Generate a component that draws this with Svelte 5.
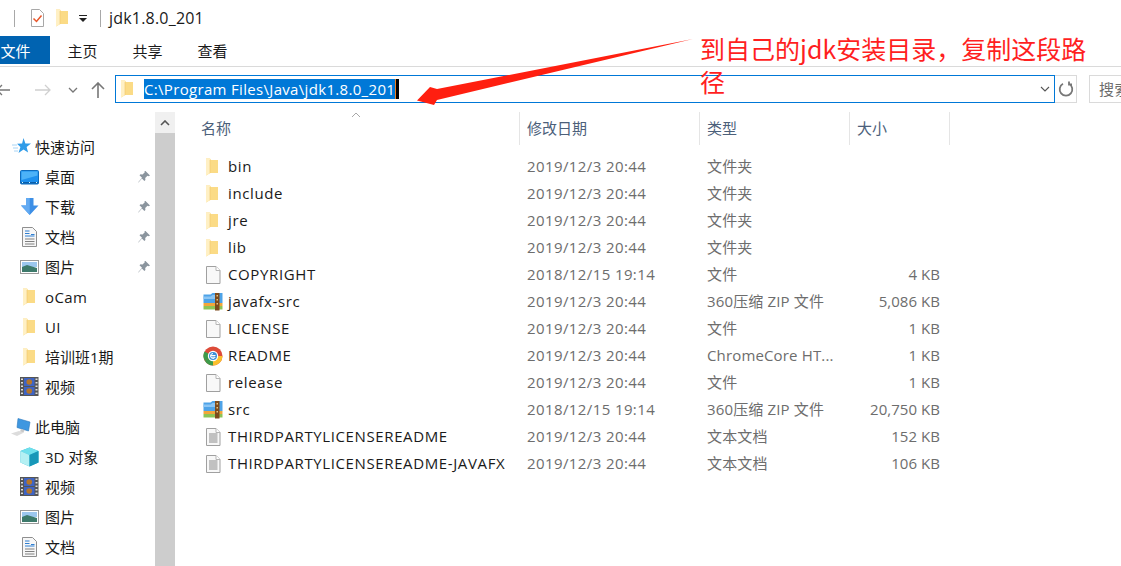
<script>
  const quick = [
    { icon: 'desktop', name: '桌面', pin: true, cjk: true },
    { icon: 'download', name: '下载', pin: true, cjk: true },
    { icon: 'doc', name: '文档', pin: true, cjk: true },
    { icon: 'pics', name: '图片', pin: true, cjk: true },
    { icon: 'folder', name: 'oCam' },
    { icon: 'folder', name: 'UI' },
    { icon: 'folder', name: '培训班1期', cjk: true },
    { icon: 'film', name: '视频', cjk: true }
  ];
  const computer = [
    { icon: 'cube', name: '3D 对象', cjk: true },
    { icon: 'film', name: '视频', cjk: true },
    { icon: 'pics', name: '图片', cjk: true },
    { icon: 'doc', name: '文档', cjk: true }
  ];
  const files = [
    { icon: 'folder', name: 'bin', date: '2019/12/3 20:44', type: '文件夹', size: '' },
    { icon: 'folder', name: 'include', date: '2019/12/3 20:44', type: '文件夹', size: '' },
    { icon: 'folder', name: 'jre', date: '2019/12/3 20:44', type: '文件夹', size: '' },
    { icon: 'folder', name: 'lib', date: '2019/12/3 20:44', type: '文件夹', size: '' },
    { icon: 'blank', name: 'COPYRIGHT', date: '2018/12/15 19:14', type: '文件', size: '4 KB' },
    { icon: 'zip', name: 'javafx-src', date: '2019/12/3 20:44', type: '360压缩 ZIP 文件', size: '5,086 KB' },
    { icon: 'blank', name: 'LICENSE', date: '2019/12/3 20:44', type: '文件', size: '1 KB' },
    { icon: 'chrome', name: 'README', date: '2019/12/3 20:44', type: 'ChromeCore HT...', size: '1 KB' },
    { icon: 'blank', name: 'release', date: '2019/12/3 20:44', type: '文件', size: '1 KB' },
    { icon: 'zip', name: 'src', date: '2018/12/15 19:14', type: '360压缩 ZIP 文件', size: '20,750 KB' },
    { icon: 'text', name: 'THIRDPARTYLICENSEREADME', date: '2019/12/3 20:44', type: '文本文档', size: '152 KB' },
    { icon: 'text', name: 'THIRDPARTYLICENSEREADME-JAVAFX', date: '2019/12/3 20:44', type: '文本文档', size: '106 KB' }
  ];
</script>

{#snippet ico(kind)}
  <svg class="ico" viewBox="0 0 20 20" width="20" height="20">
    {#if kind === 'folder'}
      <path d="M3 1.500h4l1 1.500h7v13H7.500L3 18.500z" fill="#fbdb86" />
      <path d="M3 1.500h4v14.500l-4 2.500z" fill="#fff0c4" />
      <path d="M7 3v13" stroke="#f0c668" stroke-width=".6" />
    {:else if kind === 'blank' || kind === 'text'}
      <path d="M3.500 1.500h9.500l4 4v13H3.500z" fill="#f8f8f8" stroke="#a0a0a0" />
      <path d="M13 1.500V5.500h4" fill="#fff" stroke="#b5b5b5" />
      {#if kind === 'text'}
        <path d="M6 7h8.500M6 9h8.500M6 11h8.500M6 13h8.500M6 15h8.500" stroke="#8a8a8a" />
      {/if}
    {:else if kind === 'zip'}
      <path d="M.5 2.500h7l2-1.500h10v10H.500z" fill="#4ea3e8" />
      <path d="M.5 4.500h7l2-1.500h3v4H.500z" fill="#8cc6f4" />
      <path d="M.5 11h19v3H.500z" fill="#f2a63a" />
      <path d="M.5 14h19v3.500H.500z" fill="#8dc456" />
      <path d="M12 1h4.500v17.500H12z" fill="#7d4a1c" />
      <path d="M13.500 3h1.500v1.500h-1.500zM13.500 7h1.500v1.500h-1.500zM13.500 11h1.500v1.500h-1.500z" fill="#e8c680" />
    {:else if kind === 'chrome'}
      <circle cx="10" cy="10" r="9.500" fill="#dd4b39" />
      <path d="M10 10L1.800 14.800A9.500 9.500 0 0 0 10 19.500z" fill="#3d9b4a" />
      <path d="M1.800 14.800A9.500 9.500 0 0 1 1.500 5.500L10 10z" fill="#3d9b4a" />
      <path d="M10 10h9.500A9.500 9.500 0 0 1 10 19.500z" fill="#fbc02d" />
      <circle cx="10" cy="10" r="5.200" fill="#fff" />
      <circle cx="10" cy="10" r="4" fill="#3b8fd9" />
      <path d="M7.500 9.500h5M8 11.200h4M10 7.500a2.500 2.500 0 1 0 2.300 3.500" fill="none" stroke="#fff" stroke-width="1" />
    {:else if kind === 'desktop'}
      <rect x=".5" y="3.500" width="18" height="13.500" rx="1" fill="#1e90ee" stroke="#0f6cbd" />
      <path d="M1 15h17v1.500H1z" fill="#0b5ea8" />
      <path d="M1.500 4.500h16v4L1.500 13z" fill="#4db2f7" />
      <path d="M2 15.500h1M9 15.500h1M16 15.500h1" stroke="#dff" />
    {:else if kind === 'download'}
      <path d="M6 1h7.500v7.500h5L9.750 18 1 8.500h5z" fill="#3d8fe6" />
      <path d="M6 1h3.700v17L1 8.500h5z" fill="#62aaf2" />
    {:else if kind === 'doc'}
      <path d="M2.500 .5h10l4 4v15h-14z" fill="#f7f7f7" stroke="#8f8f8f" />
      <path d="M5 4h4.500M5 6.500h4.500M11 7.500h3.500M5 9h9.500" stroke="#2f7fd1" />
      <path d="M5 12h9.500M5 14.500h9.500M5 17h9.500" stroke="#808080" />
    {:else if kind === 'pics'}
      <rect x=".5" y="3.500" width="18" height="13" fill="#fff" stroke="#9a9a9a" />
      <rect x="2" y="5" width="15" height="5" fill="#9cc7ee" />
      <path d="M2 10l5-2 10 3v4H2z" fill="#3d7a6b" />
    {:else if kind === 'film'}
      <rect x="0" y="0" width="18.500" height="19" fill="#555" />
      <rect x="4" y="1" width="10.500" height="8" fill="#3e64c4" />
      <rect x="4" y="10" width="10.500" height="8" fill="#3e64c4" />
      <circle cx="9.250" cy="5" r="2.800" fill="#b4762c" />
      <circle cx="9.250" cy="14" r="2.800" fill="#b4762c" />
      <path d="M1 1.500h2V3H1zM1 5h2v1.500H1zM1 8.500h2V10H1zM1 12h2v1.500H1zM1 15.500h2V17H1zM15.500 1.500h2V3h-2zM15.500 5h2v1.500h-2zM15.500 8.500h2V10h-2zM15.500 12h2v1.500h-2zM15.500 15.500h2V17h-2z" fill="#ddd" />
    {:else if kind === 'cube'}
      <path d="M9.500 .5l9 3.500v11.500l-9 4-9-4V4z" fill="#2db9d4" />
      <path d="M9.500 .5l9 3.500-9 4-9-4z" fill="#6fe0ec" />
      <path d="M.5 4l9 4v11.500l-9-4z" fill="#b4f0f3" />
      <path d="M9.500 8l9-4v11.500l-9 4z" fill="#1797b8" />
    {:else if kind === 'star'}
      <path d="M12.500 1l1.900 5.400 5.600.2-4.400 3.500 1.500 5.400-4.600-3.100-5 3.500 1.900-5.800-3.400-3.300 5.100-.3z" fill="#2f9be8" />
      <path d="M1 8h5M2 11h5M3 14h4" stroke="#a8d4f5" />
    {:else if kind === 'pc'}
      <path d="M7 1.500l12 3.500-1.500 9L6 10.500z" fill="#3f97e0" stroke="#2a78bd" stroke-width=".6" />
      <path d="M10 12l3.500 1-1 2.500-3.500-1z" fill="#c8c8c8" />
      <path d="M0 16.500l8-2.500 5 1.500-7 3.500z" fill="#dcdcdc" />
    {/if}
  </svg>
{/snippet}

{#snippet pin()}
  <svg class="pin" viewBox="0 0 14 14" width="14" height="14">
    <path d="M8.500 1l4.500 4.500-1.300.7-1.200-.4-2.300 2.300.2 2-1 1-2.500-2.500L1.500 12.500l-.3-.3 3.800-4.500L2.500 5.300l1-1 2 .2 2.300-2.300-.3-1.100z" fill="#8b959e" />
  </svg>
{/snippet}

{#snippet navrow(item)}
  <div class="nav-item">
    {@render ico(item.icon)}
    <span class="nav-name" class:lift={item.cjk}>{item.name}</span>
    {#if item.pin}{@render pin()}{/if}
  </div>
{/snippet}

<div class="window">
  <header class="title-bar">
    <span class="title-folder">{@render ico('folder')}</span>
    <span class="sep"></span>
    <svg class="qa-check" viewBox="0 0 15 18" width="15" height="18">
      <path d="M1.500 .5h8l4 4v13h-12z" fill="#fff" stroke="#a8a8a8" />
      <path d="M3.500 9.500l3 3 5-6" fill="none" stroke="#e8562a" stroke-width="1.500" />
    </svg>
    <span class="qa-folder">{@render ico('folder')}</span>
    <svg class="qa-drop" viewBox="0 0 8 7" width="8" height="7">
      <path d="M0 0h8v1H0zM0 3h8L4 7z" fill="#222" />
    </svg>
    <span class="sep"></span>
    <span class="title-text">jdk1.8.0_201</span>
  </header>

  <nav class="ribbon">
    <span class="tab active">文件</span>
    <span class="tab">主页</span>
    <span class="tab">共享</span>
    <span class="tab">查看</span>
  </nav>

  <div class="address-row">
    <div class="nav-buttons">
      <svg viewBox="0 0 14 12" width="14" height="12" class="back"><path d="M0 6h13M5 1L0 6l5 5" fill="none" stroke="#777" stroke-width="1.300" /></svg>
      <svg viewBox="0 0 16 12" width="16" height="12" class="forward"><path d="M0 6h15M10 1l5 5-5 5" fill="none" stroke="#d0d0d0" stroke-width="1.300" /></svg>
      <svg viewBox="0 0 10 6" width="10" height="6" class="recent"><path d="M1 1l4 4 4-4" fill="none" stroke="#777" stroke-width="1.300" /></svg>
      <svg viewBox="0 0 14 16" width="14" height="16" class="up"><path d="M7 16V1M1 7l6-6 6 6" fill="none" stroke="#777" stroke-width="1.600" /></svg>
    </div>
    <div class="address-box">
      <span class="addr-folder">{@render ico('folder')}</span>
      <span class="addr-selected">C:\Program Files\Java\jdk1.8.0_201</span><span class="caret"></span>
      <svg class="addr-drop" viewBox="0 0 10 6" width="10" height="6"><path d="M1 1l4 4 4-4" fill="none" stroke="#555" stroke-width="1.100" /></svg>
    </div>
    <div class="refresh">
      <svg viewBox="0 0 16 16" width="16" height="16"><path d="M5 2.800A6.300 6.300 0 1 0 11 2.800M11 .5v3h3" fill="none" stroke="#777" stroke-width="1.800" /></svg>
    </div>
    <div class="search">搜索</div>
  </div>

  <div class="body">
    <aside class="sidebar">
      <div class="nav-head">{@render ico('star')}<span class="lift">快速访问</span></div>
      {#each quick as item}
        {@render navrow(item)}
      {/each}
      <div class="nav-head pc">{@render ico('pc')}<span class="lift">此电脑</span></div>
      {#each computer as item}
        {@render navrow(item)}
      {/each}
    </aside>

    <div class="scrollbar">
      <div class="scroll-up">
        <svg viewBox="0 0 10 6" width="10" height="6"><path d="M1 5l4-4 4 4" fill="none" stroke="#555" stroke-width="1.600" /></svg>
      </div>
      <div class="scroll-thumb"></div>
    </div>

    <main class="list">
      <div class="columns">
        <div class="col name-col">名称
          <svg class="sort" viewBox="0 0 10 6" width="10" height="6"><path d="M1 5l4-4 4 4" fill="none" stroke="#a8a8a8" /></svg>
        </div>
        <div class="col">修改日期</div>
        <div class="col">类型</div>
        <div class="col">大小</div>
      </div>
      <div class="rows">
        {#each files as f}
          <div class="row">
            <div class="cell-name">{@render ico(f.icon)}<span class="lift">{f.name}</span></div>
            <div class="cell muted lift">{f.date}</div>
            <div class="cell muted lift type">{f.type}</div>
            <div class="cell muted lift size">{f.size}</div>
          </div>
        {/each}
      </div>
    </main>
  </div>

  <!-- annotation drawn over the screenshot -->
  <svg class="arrow" viewBox="0 0 1121 566" width="1121" height="566">
    <path d="M693 39L437 89 430 87 417 100.500 434 105 437 100z" fill="#ff1f10" />
  </svg>
  <div class="note">到自己的jdk安装目录，复制这段路径</div>
</div>

<style>
  :global(body) {
    background: #fff;
    overflow: hidden;
  }

  .window {
    position: relative;
    width: 1121px;
    height: 566px;
    overflow: hidden;
    background: #fff;
    color: #1a1a1a;
    font-family: "Open Sans", "Noto Sans CJK SC", sans-serif;
    font-size: 15px;
    letter-spacing: .4px;
  }

  .ico {
    display: block;
    flex: none;
  }

  .lift {
    padding-bottom: 2px;
  }

  /* title bar */
  .title-bar {
    display: flex;
    align-items: center;
    height: 36px;
  }

  .title-folder {
    margin-left: -17px;
    width: 31px;
  }

  .sep {
    width: 1px;
    height: 17px;
    background: #a8a8a8;
  }

  .qa-check {
    margin-left: 15px;
  }

  .qa-folder {
    margin-left: 8px;
  }

  .qa-drop {
    margin-left: 6px;
    margin-right: 13px;
  }

  .title-text {
    margin-left: 8px;
    font-size: 16px;
    letter-spacing: .2px;
  }

  /* ribbon */
  .ribbon {
    display: flex;
    height: 31px;
    border-bottom: 1px solid #dadada;
    box-sizing: border-box;
    align-items: flex-start;
  }

  .tab {
    height: 28px;
    line-height: 30px;
    width: 65px;
    text-align: center;
    letter-spacing: 0;
  }

  .tab.active {
    width: 50px;
    padding-right: 19px;
    box-sizing: border-box;
    background: #0063b1;
    color: #fff;
  }

  /* address row */
  .address-row {
    display: flex;
    align-items: flex-start;
    height: 45px;
    padding-top: 8px;
    box-sizing: border-box;
  }

  .nav-buttons {
    display: flex;
    align-items: center;
    width: 115px;
    height: 29px;
    flex: none;
  }

  .back {
    margin-left: -3px;
  }

  .forward {
    margin-left: 24px;
  }

  .recent {
    margin-left: 17px;
  }

  .up {
    margin-left: 13px;
  }

  .address-box {
    display: flex;
    align-items: center;
    width: 940px;
    height: 28px;
    flex: none;
    box-sizing: border-box;
    border: 1px solid #0078d7;
  }

  .addr-folder {
    margin-left: 2px;
    margin-right: 6px;
  }

  .addr-selected {
    background: #0078d7;
    color: #fff;
    line-height: 20px;
    white-space: nowrap;
    letter-spacing: .32px;
  }

  .caret {
    width: 4px;
    height: 20px;
    background: #000;
    border-left: 1px solid #f08020;
    box-sizing: border-box;
  }

  .addr-drop {
    margin-left: auto;
    margin-right: 4px;
  }

  .refresh {
    width: 22px;
    height: 28px;
    flex: none;
    box-sizing: border-box;
    border: 1px solid #dadada;
    border-left: none;
    display: flex;
    align-items: center;
    justify-content: center;
  }

  .search {
    margin-left: 12px;
    width: 60px;
    height: 28px;
    flex: none;
    box-sizing: border-box;
    border: 1px solid #dadada;
    padding-left: 9px;
    line-height: 26px;
    color: #6d6d6d;
    white-space: nowrap;
    overflow: hidden;
  }

  /* main area */
  .body {
    display: flex;
    height: 454px;
  }

  .sidebar {
    width: 155px;
    flex: none;
    padding-top: 20px;
    box-sizing: border-box;
  }

  .nav-head,
  .nav-item {
    display: flex;
    align-items: center;
    height: 30px;
  }

  .nav-head {
    padding-left: 11px;
    gap: 4px;
    letter-spacing: 0;
  }

  .nav-head.pc {
    margin-top: 10px;
  }

  .nav-item {
    padding-left: 20px;
    gap: 5px;
    position: relative;
  }

  .nav-name {
    white-space: nowrap;
  }

  .nav-name.lift {
    letter-spacing: 0;
  }

  .pin {
    position: absolute;
    left: 137px;
    top: 8px;
  }

  .scrollbar {
    width: 20px;
    flex: none;
    background: #f0f0f0;
  }

  .scroll-up {
    height: 21px;
    background: #f0f0f0;
    display: flex;
    align-items: center;
    justify-content: center;
  }

  .scroll-thumb {
    height: 433px;
    background: #cdcdcd;
  }

  .list {
    flex: 1;
    padding-left: 25px;
  }

  .columns {
    display: grid;
    grid-template-columns: 320px 180px 150px 100px;
    height: 33px;
    width: 750px;
  }

  .col {
    position: relative;
    border-right: 1px solid #e5e5e5;
    padding-left: 7px;
    line-height: 33px;
    color: #4c607a;
    box-sizing: border-box;
    letter-spacing: 0;
  }

  .name-col {
    padding-left: 1px;
  }

  .sort {
    position: absolute;
    left: 151px;
    top: 0;
  }

  .rows {
    padding-top: 8px;
  }

  .row {
    display: grid;
    grid-template-columns: 320px 180px 150px 100px;
    width: 750px;
    height: 27px;
    align-items: center;
  }

  .cell-name {
    display: flex;
    align-items: center;
    gap: 5px;
    padding-left: 3px;
    white-space: nowrap;
    letter-spacing: .62px;
  }

  .cell {
    padding-left: 7px;
    white-space: nowrap;
  }

  .muted {
    color: #6d6d6d;
  }

  .type {
    letter-spacing: .15px;
  }

  .size {
    text-align: right;
    padding-right: 10px;
    letter-spacing: .05px;
  }

  .arrow {
    position: absolute;
    left: 0;
    top: 0;
    pointer-events: none;
  }

  .note {
    position: absolute;
    left: 700px;
    top: 32px;
    width: 400px;
    color: #ff1f1f;
    font-size: 25px;
    line-height: 33px;
    letter-spacing: 0;
    font-family: "Noto Sans CJK SC", "Open Sans", sans-serif;
  }
</style>
